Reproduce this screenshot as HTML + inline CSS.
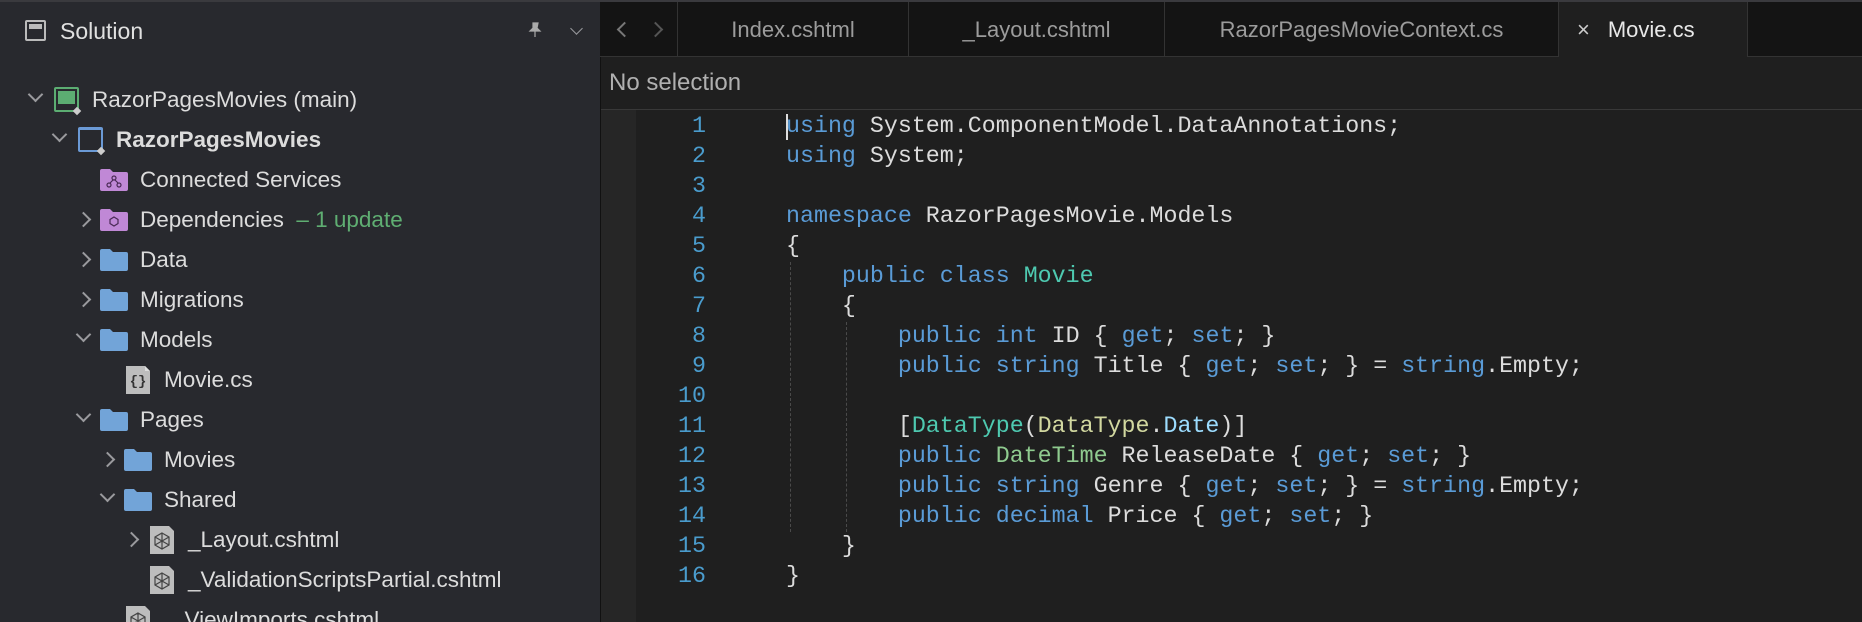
<!DOCTYPE html>
<html style="overflow:hidden"><head><meta charset="utf-8"><style>
*{margin:0;padding:0;box-sizing:border-box}
html,body{width:1862px;height:622px;overflow:hidden}
body{background:#1f1f1f;font-family:"Liberation Sans",sans-serif;position:relative}
.abs{position:absolute}
#side{left:0;top:0;width:600px;height:622px;background:#28292e;border-top:2px solid #3a3a3e;overflow:hidden}
.row{position:absolute;height:40px;line-height:40px;font-size:22.5px;color:#dcdcdc;white-space:nowrap}
.chev{position:absolute;width:11px;height:11px;border-right:2.5px solid #9a9a9e;border-bottom:2.5px solid #9a9a9e}
.down{transform:rotate(45deg)}
.right{transform:rotate(-45deg)}
.folder{position:absolute;width:28px;height:22px}
#tabs{left:600px;top:0;width:1262px;height:57px;background:#141414;border-top:2px solid #3a3a3e;border-bottom:1px solid #333}
.tab{position:absolute;top:0;height:56px;line-height:56px;font-size:22px;color:#9c9c9c;text-align:center;border-left:1px solid #333}
#code{font-family:"Liberation Mono",monospace;font-size:23.3px;color:#dcdcdc;white-space:pre}
.ln{position:absolute;left:640px;width:66px;text-align:right;font-family:"Liberation Mono",monospace;font-size:23.3px;color:#4a9ccd}
.k{color:#5a9bd6}.t{color:#4ec9b0}.y{color:#d2d8a0}.p{color:#9cdcfe}.g{color:#8fcb8f}
.guide{position:absolute;width:0;border-left:1.5px dashed #4a4a4a}
</style></head><body>

<div id="side" class="abs">
 <div class="abs" style="left:25px;top:18px;width:21px;height:21px;border:2px solid #bbb;border-radius:2px"><div style="margin:2px;height:5px;background:#bbb"></div></div>
 <div class="abs" style="left:60px;top:16px;font-size:23px;color:#e0e0e0">Solution</div>
 <svg class="abs" style="left:528px;top:20px" width="14" height="16" viewBox="0 0 14 16"><path d="M5 1h5l-1 5 3 3H2l3-3z M7 9v6" fill="#aaa" stroke="#aaa" stroke-width="1.2"/></svg>
 <div class="chev down abs" style="left:572px;top:22px;width:9px;height:9px;border-width:1.8px"></div>

 <div class="chev down" style="left:30px;top:87px"></div>
 <div class="abs" style="left:54px;top:85px;width:25px;height:25px;border:2px solid #5cad72;border-radius:2px"><div style="margin:2px;height:13px;background:#5cad72"></div></div>
 <div class="abs" style="left:74px;top:106px;width:6px;height:6px;background:#ccc;transform:rotate(45deg)"></div>
 <div class="row" style="left:92px;top:78px">RazorPagesMovies (main)</div>

 <div class="chev down" style="left:54px;top:127px"></div>
 <div class="abs" style="left:78px;top:125px;width:25px;height:25px;border:2px solid #6b9ad6;border-top-width:3px;border-radius:2px"></div>
 <div class="abs" style="left:98px;top:146px;width:6px;height:6px;background:#ccc;transform:rotate(45deg)"></div>
 <div class="row" style="left:116px;top:118px;font-weight:bold">RazorPagesMovies</div>

 <svg class="folder" style="left:100px;top:167px" viewBox="0 0 28 22"><path d="M0 2a2 2 0 0 1 2-2h8l3 3h13a2 2 0 0 1 2 2v15a2 2 0 0 1-2 2H2a2 2 0 0 1-2-2z" fill="#c088d6"/><circle cx="14" cy="9" r="2" fill="none" stroke="#4a2a55" stroke-width="1.2"/><circle cx="9" cy="16" r="2" fill="none" stroke="#4a2a55" stroke-width="1.2"/><circle cx="19" cy="16" r="2" fill="none" stroke="#4a2a55" stroke-width="1.2"/><path d="M13 11l-3 3M15 11l3 3" stroke="#4a2a55" stroke-width="1.2"/></svg>
 <div class="row" style="left:140px;top:158px">Connected Services</div>

 <div class="chev right" style="left:78px;top:212px"></div>
 <svg class="folder" style="left:100px;top:207px" viewBox="0 0 28 22"><path d="M0 2a2 2 0 0 1 2-2h8l3 3h13a2 2 0 0 1 2 2v15a2 2 0 0 1-2 2H2a2 2 0 0 1-2-2z" fill="#c088d6"/><path d="M14 8l4 2.5v4L14 17l-4-2.5v-4z" fill="none" stroke="#4a2a55" stroke-width="1.2"/></svg>
 <div class="row" style="left:140px;top:198px">Dependencies <span style="color:#5fae72">&nbsp;– 1 update</span></div>

 <div class="chev right" style="left:78px;top:252px"></div>
 <svg class="folder" style="left:100px;top:247px" viewBox="0 0 28 22"><path d="M0 2a2 2 0 0 1 2-2h8l3 3h13a2 2 0 0 1 2 2v15a2 2 0 0 1-2 2H2a2 2 0 0 1-2-2z" fill="#72a4d8"/></svg>
 <div class="row" style="left:140px;top:238px">Data</div>

 <div class="chev right" style="left:78px;top:292px"></div>
 <svg class="folder" style="left:100px;top:287px" viewBox="0 0 28 22"><path d="M0 2a2 2 0 0 1 2-2h8l3 3h13a2 2 0 0 1 2 2v15a2 2 0 0 1-2 2H2a2 2 0 0 1-2-2z" fill="#72a4d8"/></svg>
 <div class="row" style="left:140px;top:278px">Migrations</div>

 <div class="chev down" style="left:78px;top:327px"></div>
 <svg class="folder" style="left:100px;top:327px" viewBox="0 0 28 22"><path d="M0 2a2 2 0 0 1 2-2h8l3 3h13a2 2 0 0 1 2 2v15a2 2 0 0 1-2 2H2a2 2 0 0 1-2-2z" fill="#72a4d8"/></svg>
 <div class="row" style="left:140px;top:318px">Models</div>

 <svg class="abs" style="left:126px;top:364px" width="24" height="28" viewBox="0 0 24 28"><path d="M0 0h19l5 5v23H0z" fill="#bdbdbd"/><path d="M19 0v5h5" fill="#ddd"/><text x="12" y="19" font-family="Liberation Mono" font-size="14" font-weight="bold" text-anchor="middle" fill="#333">{}</text></svg>
 <div class="row" style="left:164px;top:358px">Movie.cs</div>

 <div class="chev down" style="left:78px;top:407px"></div>
 <svg class="folder" style="left:100px;top:407px" viewBox="0 0 28 22"><path d="M0 2a2 2 0 0 1 2-2h8l3 3h13a2 2 0 0 1 2 2v15a2 2 0 0 1-2 2H2a2 2 0 0 1-2-2z" fill="#72a4d8"/></svg>
 <div class="row" style="left:140px;top:398px">Pages</div>

 <div class="chev right" style="left:102px;top:452px"></div>
 <svg class="folder" style="left:124px;top:447px" viewBox="0 0 28 22"><path d="M0 2a2 2 0 0 1 2-2h8l3 3h13a2 2 0 0 1 2 2v15a2 2 0 0 1-2 2H2a2 2 0 0 1-2-2z" fill="#72a4d8"/></svg>
 <div class="row" style="left:164px;top:438px">Movies</div>

 <div class="chev down" style="left:102px;top:487px"></div>
 <svg class="folder" style="left:124px;top:487px" viewBox="0 0 28 22"><path d="M0 2a2 2 0 0 1 2-2h8l3 3h13a2 2 0 0 1 2 2v15a2 2 0 0 1-2 2H2a2 2 0 0 1-2-2z" fill="#72a4d8"/></svg>
 <div class="row" style="left:164px;top:478px">Shared</div>

 <div class="chev right" style="left:126px;top:532px"></div>
 <svg class="abs" style="left:150px;top:524px" width="24" height="28" viewBox="0 0 24 28"><path d="M0 0h19l5 5v23H0z" fill="#bdbdbd"/><path d="M12 7l7 4v8l-7 4-7-4v-8z M5 11l14 8 M19 11L5 19 M12 7v16" fill="none" stroke="#444" stroke-width="1.2"/></svg>
 <div class="row" style="left:188px;top:518px">_Layout.cshtml</div>

 <svg class="abs" style="left:150px;top:564px" width="24" height="28" viewBox="0 0 24 28"><path d="M0 0h19l5 5v23H0z" fill="#bdbdbd"/><path d="M12 7l7 4v8l-7 4-7-4v-8z M5 11l14 8 M19 11L5 19 M12 7v16" fill="none" stroke="#444" stroke-width="1.2"/></svg>
 <div class="row" style="left:188px;top:558px">_ValidationScriptsPartial.cshtml</div>

 <svg class="abs" style="left:126px;top:604px" width="24" height="28" viewBox="0 0 24 28"><path d="M0 0h19l5 5v23H0z" fill="#bdbdbd"/><path d="M12 7l7 4v8l-7 4-7-4v-8z M5 11l14 8 M19 11L5 19 M12 7v16" fill="none" stroke="#444" stroke-width="1.2"/></svg>
 <div class="row" style="left:172px;top:598px">_ViewImports.cshtml</div>
</div>
<div class="abs" style="left:600px;top:0;width:1px;height:622px;background:#111"></div>

<div id="tabs" class="abs">
 <div class="chev abs" style="left:19px;top:22px;width:11px;height:11px;border:none;border-left:2px solid #777;border-bottom:2px solid #777;transform:rotate(45deg)"></div>
 <div class="chev abs" style="left:50px;top:22px;width:11px;height:11px;border-right:2px solid #555;border-bottom:none;border-top:2px solid #555;transform:rotate(45deg)"></div>
 <div class="tab" style="left:77px;width:231px">Index.cshtml</div>
 <div class="tab" style="left:308px;width:256px">_Layout.cshtml</div>
 <div class="tab" style="left:564px;width:394px">RazorPagesMovieContext.cs</div>
 <div class="tab" style="left:958px;width:190px;background:#1f1f1f;height:57px;color:#e8e8e8;text-align:left;border-right:1px solid #333"><span style="margin-left:18px;color:#ccc">×</span><span style="margin-left:18px">Movie.cs</span></div>
</div>

<div class="abs" style="left:601px;top:57px;width:1261px;height:53px;background:#1f1f1f;border-bottom:1px solid #383838"></div>
<div class="abs" style="left:609px;top:69px;font-size:24px;color:#b0b0b0">No selection</div>

<div class="abs" style="left:601px;top:110px;width:35px;height:512px;background:#262626"></div>

<div class="ln" style="top:111px;line-height:30px">1<br>2<br>3<br>4<br>5<br>6<br>7<br>8<br>9<br>10<br>11<br>12<br>13<br>14<br>15<br>16</div>

<div class="guide" style="left:790px;top:262px;height:270px"></div>
<div class="guide" style="left:846px;top:322px;height:210px"></div>
<div class="abs" style="left:786px;top:114px;width:2px;height:26px;background:#ddd"></div>

<div id="code" class="abs" style="left:786px;top:111px;line-height:30px"><span class="k">using</span> System.ComponentModel.DataAnnotations;
<span class="k">using</span> System;

<span class="k">namespace</span> RazorPagesMovie.Models
{
    <span class="k">public</span> <span class="k">class</span> <span class="t">Movie</span>
    {
        <span class="k">public</span> <span class="k">int</span> ID { <span class="k">get</span>; <span class="k">set</span>; }
        <span class="k">public</span> <span class="k">string</span> Title { <span class="k">get</span>; <span class="k">set</span>; } = <span class="k">string</span>.Empty;

        [<span class="t">DataType</span>(<span class="y">DataType</span>.<span class="p">Date</span>)]
        <span class="k">public</span> <span class="g">DateTime</span> ReleaseDate { <span class="k">get</span>; <span class="k">set</span>; }
        <span class="k">public</span> <span class="k">string</span> Genre { <span class="k">get</span>; <span class="k">set</span>; } = <span class="k">string</span>.Empty;
        <span class="k">public</span> <span class="k">decimal</span> Price { <span class="k">get</span>; <span class="k">set</span>; }
    }
}</div>
</body></html>
